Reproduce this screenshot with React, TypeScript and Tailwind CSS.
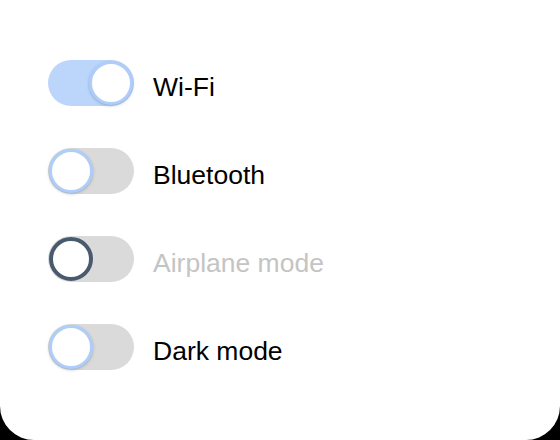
import React from 'react';

type Item = { label: string; on?: boolean; disabled?: boolean };

const items: Item[] = [
  { label: 'Wi-Fi', on: true },
  { label: 'Bluetooth' },
  { label: 'Airplane mode', disabled: true },
  { label: 'Dark mode' },
];

const Toggle = ({ on, disabled }: { on?: boolean; disabled?: boolean }) => (
  <div
    className={`flex items-center w-[86px] h-[46px] rounded-full px-px ${
      on ? 'bg-[#bcd6fb] justify-end' : 'bg-[#dadada] justify-start'
    }`}
  >
    <div
      className={`w-[44px] h-[44px] rounded-full bg-white ${
        disabled
          ? 'border-[4px] border-[#4a5a6e]'
          : 'border-[3px] border-[#afcdf9] shadow-[0_1px_3px_rgba(60,80,120,0.35)]'
      }`}
    />
  </div>
);

export default function App() {
  return (
    <div className="w-[560px] h-[440px] bg-black">
      <div
        className="w-full h-full bg-white rounded-b-[34px] pt-[60px] pl-[48px] flex flex-col gap-[42px]"
        style={{ fontFamily: '"Liberation Sans", Arial, sans-serif' }}
      >
        {items.map((it) => (
          <div key={it.label} className="flex items-center gap-[19px]">
            <Toggle on={it.on} disabled={it.disabled} />
            <span
              className={`text-[26.5px] leading-none mt-[9px] ${
                it.disabled ? 'text-[#c4c4c4]' : 'text-black'
              }`}
            >
              {it.label}
            </span>
          </div>
        ))}
      </div>
    </div>
  );
}
